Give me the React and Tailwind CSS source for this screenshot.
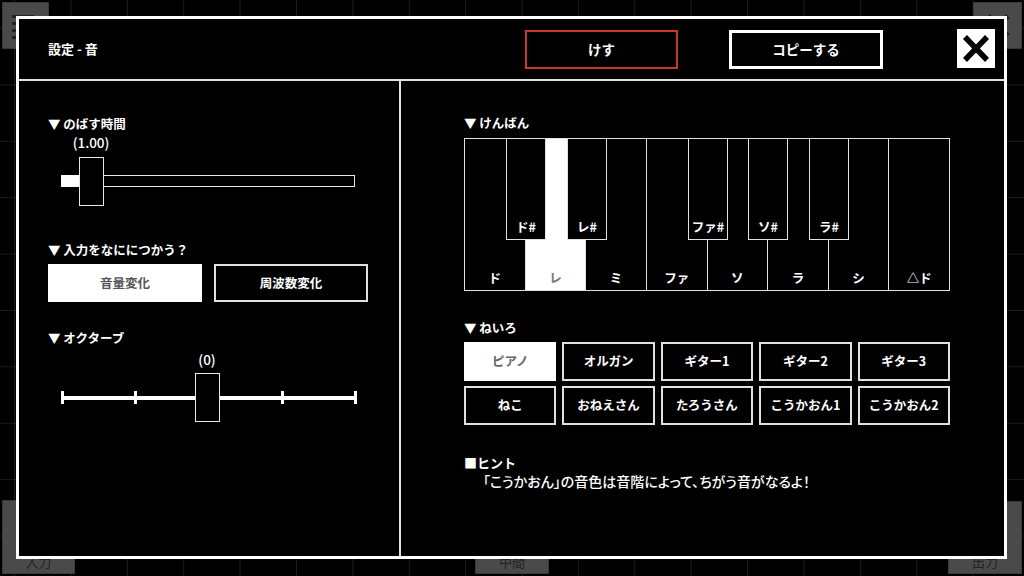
import React, { useState } from 'react';

// 白鍵 8 つ、黒鍵 5 つ (left は鍵盤左端からの px)
const WHITE_KEYS = ['ド', 'レ', 'ミ', 'ファ', 'ソ', 'ラ', 'シ', '△ド'];
const BLACK_KEYS = [
  { label: 'ド#', pos: 'left-[41px]' },
  { label: 'レ#', pos: 'left-[102px]' },
  { label: 'ファ#', pos: 'left-[223px]' },
  { label: 'ソ#', pos: 'left-[283px]' },
  { label: 'ラ#', pos: 'left-[344px]' },
];

const TONES = ['ピアノ', 'オルガン', 'ギター1', 'ギター2', 'ギター3', 'ねこ', 'おねえさん', 'たろうさん', 'こうかおん1', 'こうかおん2'];

function Heading({ children, className = '' }) {
  return <div className={`h-4 leading-4 text-[12.5px] font-bold text-white ${className}`}>{children}</div>;
}

export default function App() {
  const [tone, setTone] = useState('ピアノ');
  const [input, setInput] = useState('音量変化');
  const [key, setKey] = useState('レ');

  return (
    <div className="relative w-[1024px] h-[576px] overflow-hidden bg-black font-['Noto_Sans_CJK_JP','Noto_Sans',sans-serif] text-white">
      {/* 背景のグリッド */}
      <div className="absolute inset-0 bg-[linear-gradient(to_right,#1c1c1c_1px,transparent_1px),linear-gradient(to_bottom,#1c1c1c_1px,transparent_1px)] bg-[size:56.4px_56.4px] bg-[position:14px_28px]" />

      {/* 背面のボタン */}
      <div className="absolute left-[2px] top-[2px] w-[47px] h-[47px] bg-[#4a4a4a] border border-[#3a3a3a] flex flex-col gap-[4px] pl-[9px] pt-[12px]">
        <div className="w-[22px] h-[3px] bg-[#222]" />
        <div className="w-[22px] h-[3px] bg-[#222]" />
        <div className="w-[22px] h-[3px] bg-[#222]" />
        <div className="w-[22px] h-[3px] bg-[#222]" />
      </div>
      <div className="absolute left-[973px] top-[2px] w-[49px] h-[47px] bg-[#4a4a4a] border border-[#3a3a3a] flex items-center justify-center">
        <svg width="30" height="30" viewBox="0 0 30 30">
          <path d="M5 5 L25 25 M25 5 L5 25" stroke="#222" strokeWidth="5" />
        </svg>
      </div>
      <div className="absolute left-[2px] top-[500px] w-[73px] h-[74px] bg-[#4a4a4a] border border-[#3a3a3a] flex items-end justify-center pb-[2px] text-[13px] text-[#222]">入力</div>
      <div className="absolute left-[475px] top-[500px] w-[74px] h-[74px] bg-[#4a4a4a] border border-[#3a3a3a] flex items-end justify-center pb-[2px] text-[13px] text-[#222]">中間</div>
      <div className="absolute left-[948px] top-[501px] w-[74px] h-[73px] bg-[#4a4a4a] border border-[#3a3a3a] flex items-end justify-center pb-[2px] text-[13px] text-[#222]">出力</div>

      {/* 設定ダイアログ */}
      <div className="absolute left-[16px] top-[16px] w-[991px] h-[543px] border-[3px] border-white bg-black flex flex-col">
        {/* ヘッダー */}
        <div className="h-[62px] shrink-0 border-b-2 border-[#e0e0e0] flex items-center">
          <div className="pl-[29px] text-[13px] font-bold">設定 - 音</div>
          <button className="ml-auto w-[153px] h-[39px] border-2 border-[#c8382c] text-[13.5px] font-bold flex items-center justify-center">けす</button>
          <button className="ml-[51px] w-[154px] h-[39px] border-[3px] border-white text-[13.5px] font-bold flex items-center justify-center">コピーする</button>
          <button className="ml-[74px] mr-[9px] w-[38px] h-[39px] bg-white flex items-center justify-center -mt-[2px]">
            <svg width="38" height="39" viewBox="0 0 38 39">
              <path d="M8 8 L30 31 M30 8 L8 31" stroke="#000" strokeWidth="5.5" />
            </svg>
          </button>
        </div>

        <div className="flex flex-1">
          {/* 左パネル */}
          <div className="w-[382px] shrink-0 border-r-2 border-[#e0e0e0] flex flex-col pl-[29px] pt-[35px]">
            <Heading>▼ のばす時間</Heading>
            <div className="mt-[2px] ml-[12px] w-[62px] h-4 leading-4 text-center text-[13.5px] font-medium">(1.00)</div>
            <div className="relative mt-[7px] ml-[13px] w-[294px] h-[49px]">
              <div className="absolute left-0 top-[18px] w-[294px] h-[12px] border-[1.5px] border-[#e8e8e8] bg-black" />
              <div className="absolute left-0 top-[18px] w-[20px] h-[12px] bg-white" />
              <div className="absolute left-[18px] top-0 w-[25px] h-[49px] border-[1.5px] border-[#e8e8e8] bg-black" />
            </div>

            <Heading className="mt-[36px]">▼ 入力をなににつかう？</Heading>
            <div className="mt-[6px] flex gap-[12px]">
              {['音量変化', '周波数変化'].map(label => (
                <button
                  key={label}
                  onClick={() => setInput(label)}
                  className={`w-[154px] h-[38px] text-[12.5px] font-bold flex items-center justify-center ${
                    input === label ? 'bg-white text-[#555]' : 'border-2 border-[#e0e0e0] text-white'
                  }`}
                >
                  {label}
                </button>
              ))}
            </div>

            <Heading className="mt-[28px]">▼ オクターブ</Heading>
            <div className="mt-[5px] ml-[129px] w-[60px] h-4 leading-4 text-center text-[13.5px] font-medium">(0)</div>
            <div className="relative mt-[6px] ml-[13px] w-[296px] h-[49px]">
              <div className="absolute left-0 top-[23px] w-[296px] h-[4px] bg-white" />
              <div className="absolute left-0 top-[18px] w-[3px] h-[13px] bg-white" />
              <div className="absolute left-[73px] top-[18px] w-[3px] h-[13px] bg-white" />
              <div className="absolute left-[220px] top-[18px] w-[3px] h-[13px] bg-white" />
              <div className="absolute left-[293px] top-[18px] w-[3px] h-[13px] bg-white" />
              <div className="absolute left-[134px] top-0 w-[25px] h-[49px] border-[1.5px] border-[#e8e8e8] bg-black" />
            </div>
          </div>

          {/* 右パネル */}
          <div className="flex-1 flex flex-col pl-[63px] pt-[34px]">
            <Heading>▼ けんばん</Heading>
            <div className="relative mt-[7px] w-[486px] h-[153px] border-[1.5px] border-[#e0e0e0] flex">
              {WHITE_KEYS.map((label, i) => (
                <div
                  key={label}
                  onClick={() => setKey(label)}
                  className={`flex-1 flex items-end justify-center pb-[2px] text-[12.5px] font-bold ${
                    i < WHITE_KEYS.length - 1 ? 'border-r-[1.5px] border-[#e0e0e0]' : ''
                  } ${key === label ? 'bg-white text-[#777]' : 'text-white'}`}
                >
                  {label}
                </div>
              ))}
              {BLACK_KEYS.map(bk => (
                <div
                  key={bk.label}
                  className={`absolute -top-[1.5px] ${bk.pos} w-[40px] h-[102px] bg-black border-[1.5px] border-[#e0e0e0] flex items-end justify-center pb-[2px] text-[12.5px] font-bold`}
                >
                  {bk.label}
                </div>
              ))}
            </div>

            <Heading className="mt-[29px]">▼ ねいろ</Heading>
            <div className="mt-[6px] w-[486px] grid grid-cols-5 gap-x-[6px] gap-y-[5px]">
              {TONES.map(t => (
                <button
                  key={t}
                  onClick={() => setTone(t)}
                  className={`h-[39px] text-[12.5px] font-bold flex items-center justify-center ${
                    tone === t ? 'bg-white text-[#666]' : 'border-2 border-[#e0e0e0] text-white'
                  }`}
                >
                  {t}
                </button>
              ))}
            </div>

            <div className="mt-[30px] h-4 leading-4 text-[13px] font-bold">■ヒント</div>
            <div className="mt-[2px] ml-[19px] h-4 leading-4 text-[14px] font-medium [font-feature-settings:'palt']">「こうかおん」の音色は音階によって、ちがう音がなるよ！</div>
          </div>
        </div>
      </div>
    </div>
  );
}
